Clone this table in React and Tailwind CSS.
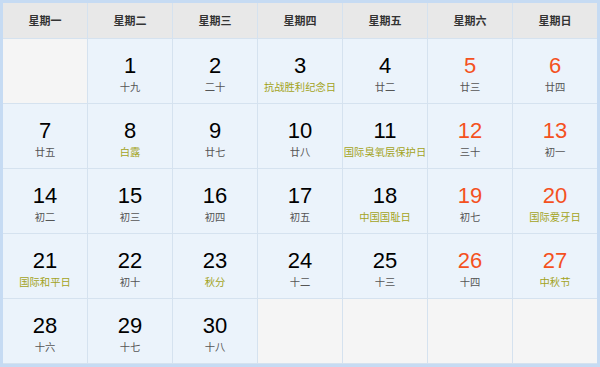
import React from "react";

const weekdays = ["星期一", "星期二", "星期三", "星期四", "星期五", "星期六", "星期日"];

// [day, lunar text, isFestival]
const days = [
  null,
  [1, "十九"], [2, "二十"], [3, "抗战胜利纪念日", true], [4, "廿二"], [5, "廿三"], [6, "廿四"],
  [7, "廿五"], [8, "白露", true], [9, "廿七"], [10, "廿八"], [11, "国际臭氧层保护日", true], [12, "三十"], [13, "初一"],
  [14, "初二"], [15, "初三"], [16, "初四"], [17, "初五"], [18, "中国国耻日", true], [19, "初七"], [20, "国际爱牙日", true],
  [21, "国际和平日", true], [22, "初十"], [23, "秋分", true], [24, "十二"], [25, "十三"], [26, "十四"], [27, "中秋节", true],
  [28, "十六"], [29, "十七"], [30, "十八"], null, null, null, null,
];

export default function App() {
  return (
    <div className="w-[600px] h-[367px] border-[3px] border-[#c6dbf3] bg-[#d5e2ef] font-['Liberation_Sans','Noto_Sans_CJK_SC',sans-serif]">
      <div className="grid grid-cols-7 grid-rows-[35px_repeat(5,64px)] gap-px pb-px">
        {weekdays.map((w) => (
          <div key={w} className="bg-[#e8e8e8] flex items-center justify-center text-[11px] font-bold text-[#333] font-['Noto_Sans_CJK_SC',sans-serif]">
            {w}
          </div>
        ))}
        {days.map((d, i) => {
          if (!d) return <div key={"e" + i} className="bg-[#f5f5f5]" />;
          const [n, lunar, fest] = d;
          const weekend = i % 7 === 5 || i % 7 === 6;
          return (
            <div key={n} className="bg-[#ebf3fb] flex flex-col items-center pt-[16px]">
              <div className={`text-[22px] leading-[22px] ${weekend ? "text-[#f4511e]" : "text-black"}`}>{n}</div>
              <div className={`mt-[3px] whitespace-nowrap text-[10.3px] leading-[14px] font-['Noto_Sans_CJK_SC',sans-serif] ${fest ? "text-[#a3a31c]" : "text-[#555]"}`}>
                {lunar}
              </div>
            </div>
          );
        })}
      </div>
    </div>
  );
}
